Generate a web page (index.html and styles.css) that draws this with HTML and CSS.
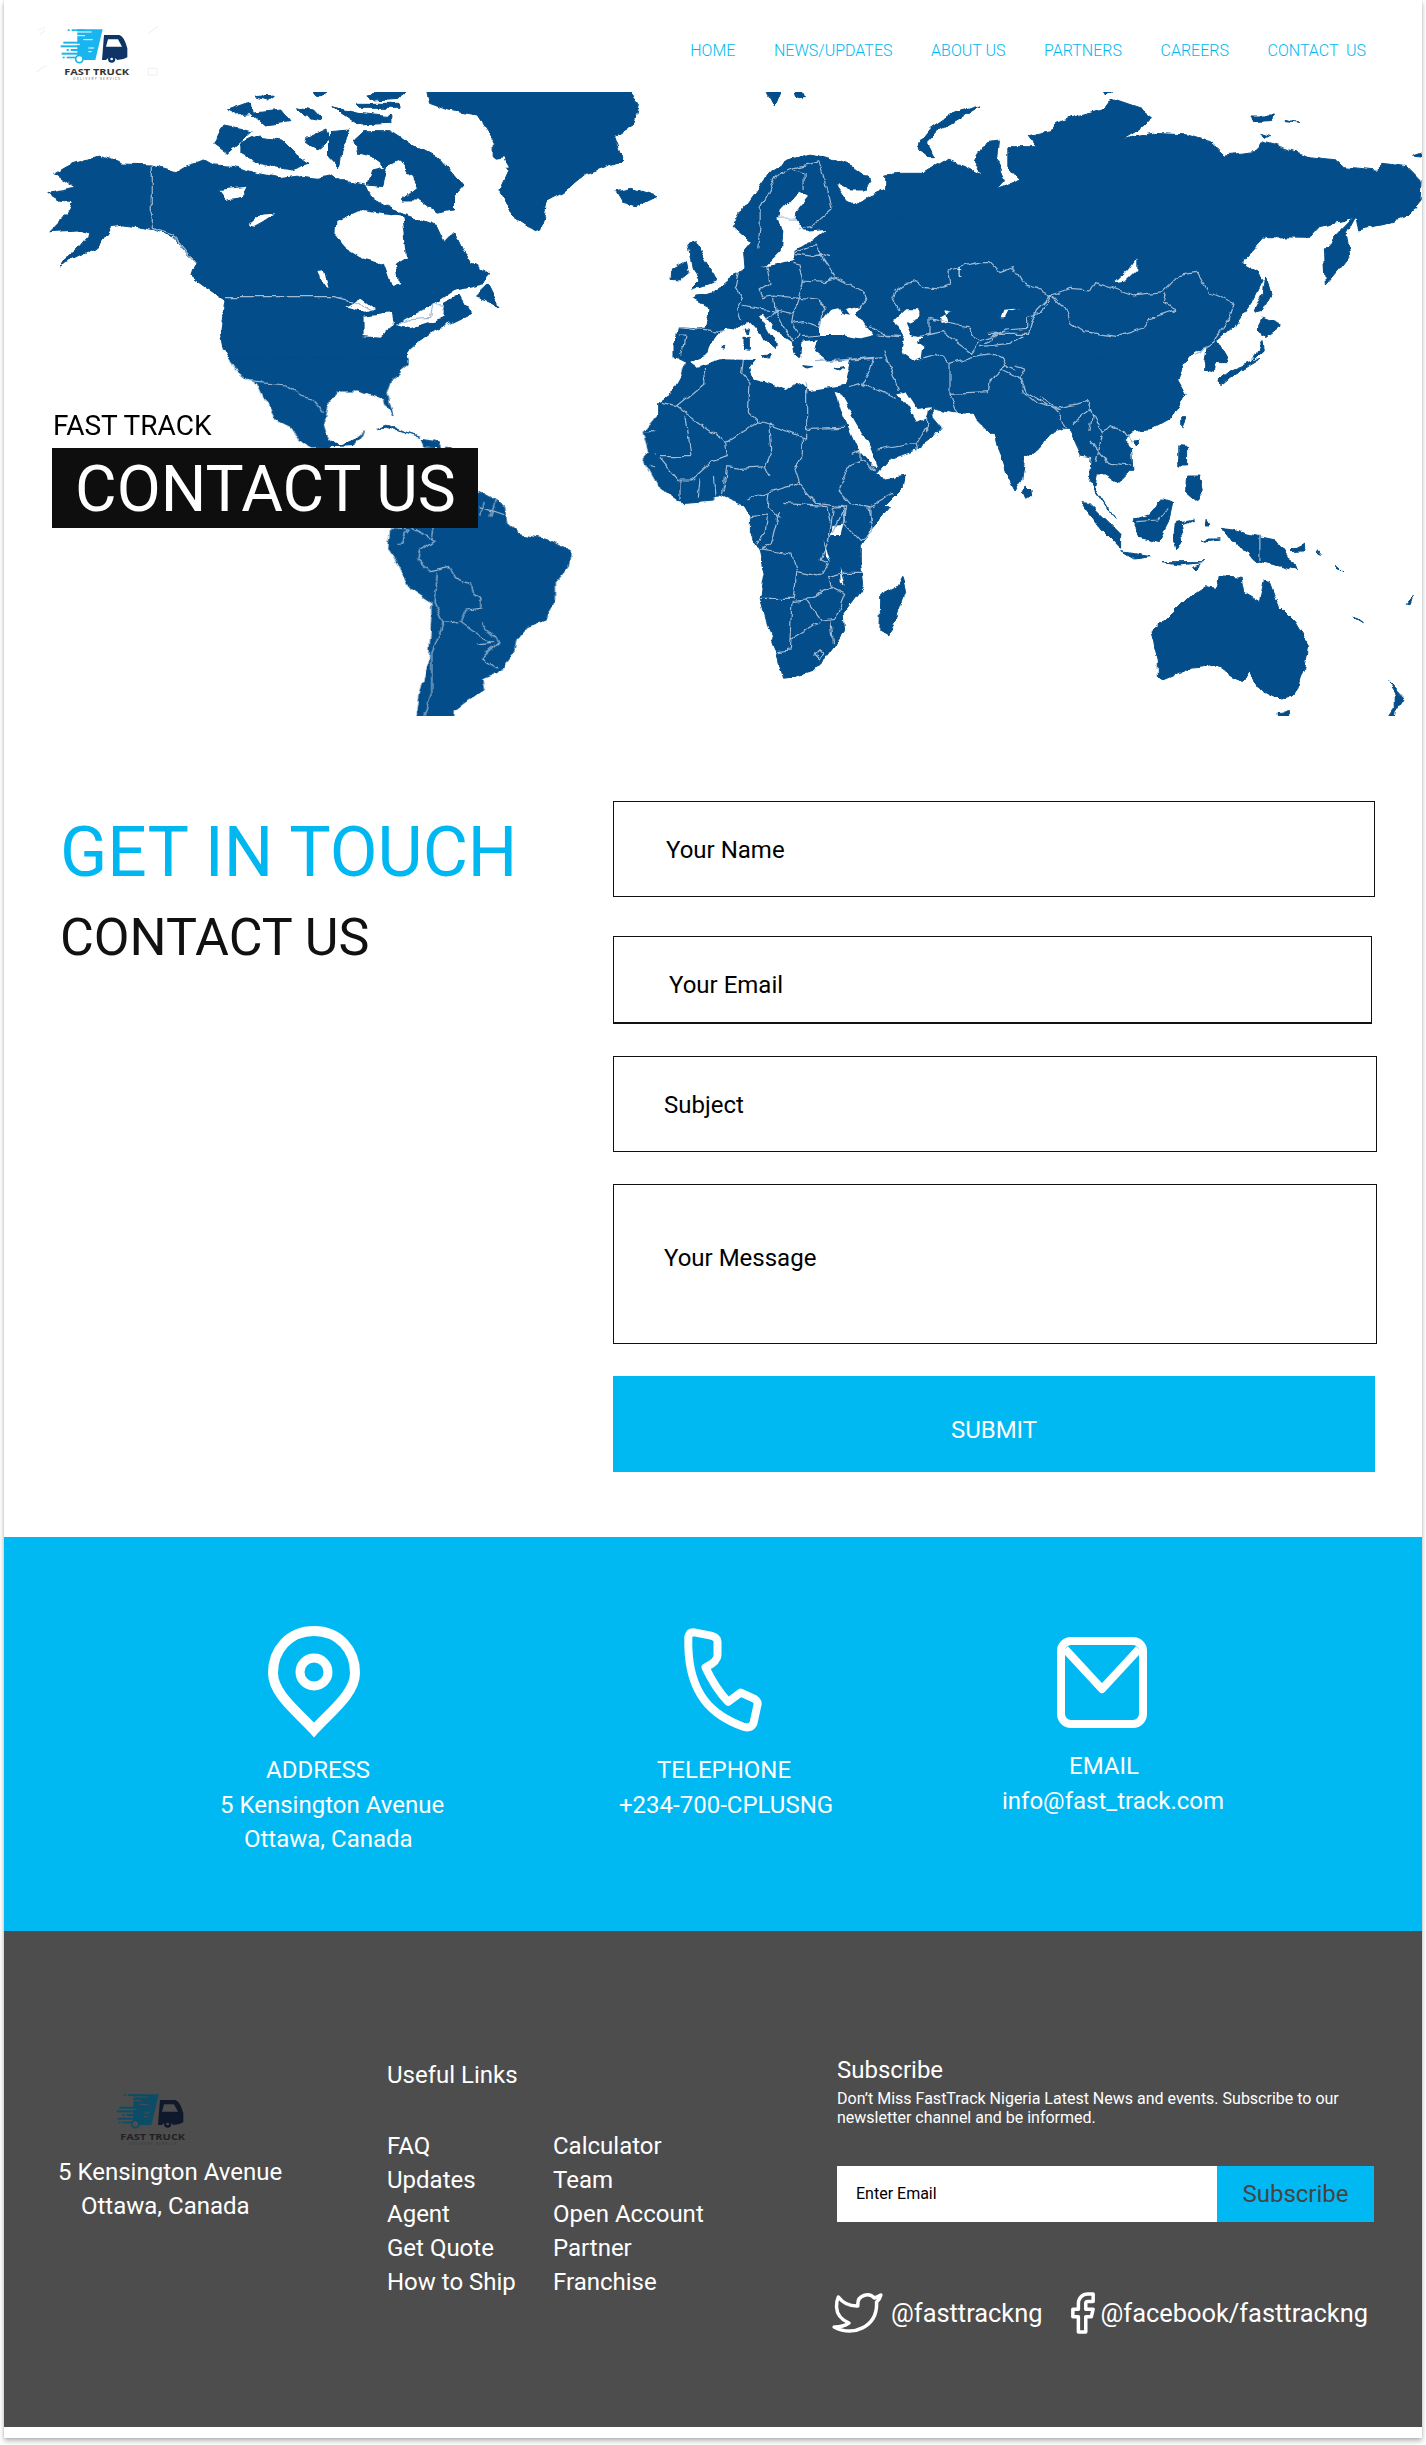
FILE: index.html
```html
<!DOCTYPE html>
<html lang="en">
<head>
<meta charset="utf-8">
<title>Fast Track - Contact Us</title>
<link rel="stylesheet" href="styles.css">
</head>
<body>
<div class="page">
  <header class="header">
    <svg class="logo logo-light" viewBox="0 0 480 240" aria-label="Fast Truck logo">
      <g class="wm"><path d="M55 60l20-8M60 75l15-15M385 70l30-22M50 185l30-20M385 175h25v20h-25z"/></g>
      <path class="cargo" d="M172 58H248L226 150H192L172 138Z"/>
      <g class="cargo">
        <rect x="143" y="58" width="6" height="5"/><rect x="155" y="58" width="40" height="5"/>
        <rect x="130" y="95" width="70" height="6"/><rect x="122" y="106" width="90" height="6"/>
        <rect x="140" y="117" width="6" height="6"/><rect x="152" y="117" width="50" height="6"/>
        <rect x="125" y="128" width="75" height="6"/><rect x="128" y="140" width="6" height="5"/><rect x="140" y="140" width="50" height="5"/>
      </g>
      <g class="gapline"><path d="M172 66H215M172 77H195M190 89H218M172 103H180M205 114H222M205 125H215"/></g>
      <circle class="gap ring" cx="178" cy="147" r="11"/>
      <path class="cab" d="M252 75H298Q312 78 322 115V142Q310 150 292 150Q275 130 258 150H246Z"/>
      <path class="gap" d="M264 88H294L306 110H258Z"/>
      <circle class="wheel" cx="275" cy="147" r="11"/><circle class="gap" cx="275" cy="147" r="4"/>
      <text class="logo-name" x="230" y="194" text-anchor="middle" textLength="195" lengthAdjust="spacingAndGlyphs">FAST TRUCK</text>
      <text class="logo-sub" x="230" y="210" text-anchor="middle" textLength="140">DELIVERY SERVICE</text>
    </svg>
    <nav class="nav">
      <a>HOME</a><a>NEWS/UPDATES</a><a>ABOUT US</a><a>PARTNERS</a><a>CAREERS</a><a class="nav-last">CONTACT  US</a>
    </nav>
  </header>

  <section class="hero">
    <svg class="map" viewBox="47 92 1375 624" width="1375" height="624" aria-label="World map">
      <defs>
        <filter id="coast" filterUnits="userSpaceOnUse" x="20" y="60" width="1430" height="690" color-interpolation-filters="sRGB">
          <feTurbulence type="fractalNoise" baseFrequency=".075" numOctaves="3" seed="4"/>
          <feDisplacementMap in="SourceGraphic" scale="7" xChannelSelector="R" yChannelSelector="G"/>
          <feGaussianBlur stdDeviation=".4"/>
        </filter>
      </defs>
      <g filter="url(#coast)">
      <!-- North America, Greenland (upper left) -->
      <g transform="scale(.4545 .3333)">
        <path class="land" d="M118 520L150 495 215 468 240 478 270 492 335 495 385 515 410 495 450 480 470 495 520 500 565 520 620 535 660 528 700 535 730 525 760 545 805 555 815 590 860 625 880 640 960 680 975 725 1000 690 1020 750 1040 790 1075 820 1065 850 1040 870 1010 880 1035 940 990 970 945 1000 925 1020 900 1050 895 1085 510 1085 490 1040 485 1000 495 900 450 860 420 830 430 790 380 710 340 690 300 680 270 675 245 680 215 740 170 770 130 795 170 750 200 700 170 690 110 695 150 640 160 605 130 600 105 580 165 565Z"/>
        <path class="sea" d="M740 660L790 630 830 640 885 650 890 700 895 770 870 790 878 850 862 855 845 790 790 770 760 745 738 710Z"/>
        <path class="sea" d="M480 570L540 560 530 590 495 600ZM545 675L570 645 608 640 580 665 560 680ZM700 810L715 808 725 865 710 850ZM760 920L795 893 825 925 805 935ZM800 950L860 940 865 975 835 1010 800 1005ZM870 975L950 915 1000 870 1070 848 1040 880 1010 885 975 910 980 950 900 985Z"/>
        <path class="land" d="M780 420L800 395 860 395 900 430 970 480 1020 560 1000 590 1000 630 960 640 920 600 885 600 920 560 880 480 850 500 820 470 790 460Z"/>
        <path class="sea" d="M888 535a10 12 0 1 0 20 0a10 12 0 1 0-20 0Z"/>
        <path class="land" d="M470 430L495 378 555 395 530 425 500 460ZM530 430L560 410 620 420 650 460 680 490 640 510 570 490 530 460ZM675 415L715 390 725 420 700 450 672 430ZM725 395L770 390 750 450 745 500 725 470ZM500 330L550 305 555 340 520 345ZM550 340L620 330 640 365 580 375ZM730 320L790 340 860 350 860 370 790 375ZM780 310L880 310 880 325 790 325ZM805 285L900 260 880 295 820 300ZM565 290L605 285 590 300ZM650 320L690 330 710 360 670 350ZM690 280L730 260 700 290ZM820 510L850 500 840 560 810 555ZM1060 870L1075 850 1100 920 1060 900 1045 890Z"/>
        <path class="land" d="M935 250L1370 250 1405 310 1395 370 1350 410 1370 480 1290 520 1240 575 1205 600 1190 690 1180 695 1130 650 1100 570 1120 510 1085 470 1085 420 1050 345 985 330 945 310Z"/>
        <path class="sea" d="M1088 480L1110 475 1120 500 1100 500Z"/>
        <path class="land" d="M1355 575L1390 565 1445 590 1400 620 1370 610Z"/>
        <path class="line" d="M335 495V685L380 705 430 790M495 890H735L780 905 820 930M870 975L900 960 945 955 950 915H975L980 950"/>
      </g>
      <!-- Central and South America, West Africa (lower left) -->
      <g transform="translate(0 360) scale(.4545 .3333)">
        <path class="land" d="M505-5H900V15L860 60 850 100 862 165 845 120 790 90 745 90 720 130 712 180 725 240 745 258 780 240 800 215 780 260 685 264 660 245 640 200 610 180 590 130 555 70 515 25Z"/>
        <path class="sea" d="M550 65L570 75 610 195 590 165Z"/>
        <path class="land" d="M830 205L850 195 885 215 920 232 880 215 850 205ZM925 238L965 245 970 260 930 258ZM980 255L992 258 982 262Z"/>
        <path class="land" d="M860 500L1051 395 1085 420 1110 440 1115 490 1140 520 1200 535 1255 575 1250 620 1220 670 1220 720 1200 780 1160 800 1135 840 1130 880 1095 940 1060 960 1065 990 1030 1020 1000 1050 995 1100H915L925 1000 945 900 950 770V730L905 690 880 620 855 565Z"/>
        <path class="land" d="M1570-10H1510L1495 90 1455 150 1417 215 1430 280 1417 300 1450 380 1500 428 1570 420Z"/>
        <path class="line" d="M858 505L900 510 875 555M905 505L955 540 925 570 918 600 945 635 990 622 1000 650 1035 670 1040 700 1060 720V745L1025 750 1015 785 1060 830 1085 850 1050 855M1060 790L1090 830 1095 850 1060 895 1095 925M960 640L955 730 975 790 1010 785M975 790L950 880V1000L935 1070M1055 440L1110 465M1065 420L1060 470M1090 420L1080 470M950 540L955 500M550 65L630 75 660 105 690 120 712 155M1417 215H1450L1458 150H1490L1568 215M1510 170L1515 295H1460L1440 280M1430 315L1470 340 1520 360M1490 120L1500 90 1568 80"/>
      </g>
      <!-- Russia, Scandinavia, East Asia (upper right) -->
      <g transform="translate(660 0) scale(.4885 .3333)">
        <path class="land" d="M150 680L165 640 225 515 260 480 310 462 350 475 400 505 432 540 418 570 390 570 360 548 385 600 405 615 428 590 460 570 460 525 490 520 535 520 580 480 620 495 660 525 645 480 670 425 695 420 690 490 705 540 690 565 735 540 710 500 710 440 770 440 755 410 800 395 810 370 860 345 910 325 925 295 985 325 1008 350 990 380 948 418 1010 400 1080 405 1125 425 1155 465 1220 455 1230 425 1270 440 1330 470 1385 480 1400 500 1465 510 1480 490 1530 500 1560 545 1558 600 1530 650 1490 670 1430 690 1425 650 1395 665 1350 680 1330 712 1240 710 1190 790 1225 820 1235 840 1215 900 1180 970 1140 1020 1165 1085H1115L1120 1045 1095 1050 1076 1085H350V800L250 780 200 745Z"/>
        <path class="sea" d="M240 690L250 630 285 575 303 590 275 640 270 680 340 685 300 700 290 720 320 730 270 740 245 760Z"/>
        <path class="sea" d="M975 778V810L950 845 930 850 960 810Z"/>
        <path class="land" d="M1425 645L1405 700 1412 770 1362 858 1358 750 1395 690ZM1240 830L1250 880 1230 935 1215 940 1235 880ZM1235 955L1270 975 1240 1010 1225 985ZM1215 1080L1232 1020 1235 1050 1210 1085ZM655 318L600 340 555 385 525 440 550 470 560 470 545 430 570 390 620 350ZM215 265H250L235 320ZM275 265L300 290 280 295ZM895 265H935L910 285ZM1210 345H1260L1250 365 1215 368ZM1280 358L1310 370 1280 365ZM1230 400L1250 410 1235 412ZM1540 465L1560 455V468Z"/>
      </g>
      <!-- Africa, South-East Asia, Oceania (lower right) -->
      <g transform="translate(660 360) scale(.4885 .3333)">
        <path class="land" d="M170 430L185 470 185 520 205 570 215 640 205 715 225 820 240 880 255 955 310 935 335 900 378 815 375 760 415 680 410 600 410 560 430 510 470 440Z"/>
        <path class="land" d="M760-5H1075L1060 60 1075 100 1050 170 1000 210 970 215 950 240 965 260 968 330 940 370 910 345 895 345 890 385 930 475 900 410 880 370 885 290 860 285 835 205 825 205 760 150Z"/>
        <path class="sea" d="M355 495L375 492 370 525 352 525ZM335 540L345 590 350 610 340 590ZM370 620L380 680 372 670Z"/>
        <path class="land" d="M495 652L503 695 480 790 465 828 450 815 452 705 485 680ZM862 428L880 430 945 525 945 570 905 510ZM945 575L1005 590 970 597ZM968 480L1000 465 1030 415 1050 425 1040 490 1020 545 985 530ZM1055 490L1095 480 1065 495 1070 540 1058 570 1052 530ZM1150 505L1175 510 1195 520 1260 540 1285 590 1303 632 1260 615 1215 600 1200 570 1170 545ZM1062 260L1078 262V315H1062ZM1078 345H1105L1112 390 1100 425 1076 395ZM1068 170H1078L1068 205ZM970 240L985 238 975 255ZM1030 605H1115L1060 612ZM1090 620L1110 610 1095 630ZM1110 540H1145L1120 545ZM1120 478L1128 498H1118ZM1290 572L1320 550 1315 570ZM1115 0H1135L1130 35 1115 30ZM1145 60L1170 30 1230-5 1190 30 1148 80Z"/>
        <path class="land" d="M1005 815L1050 760 1080 715 1115 680 1140 685 1145 650 1190 655 1195 700 1225 725 1235 660 1250 665 1270 745 1300 790 1328 860 1320 925 1300 1005 1270 1020 1230 990 1205 940 1190 965 1140 915 1090 925 1030 962 1020 950V900ZM1265 1055L1285 1052V1100H1270ZM1490 965L1522 1015 1505 1055 1500 1100H1478L1505 1040V1000ZM1530 730L1540 712 1535 735ZM1420 765L1440 788 1425 775ZM1345 572L1352 586 1346 582ZM1385 615L1400 635 1388 625Z"/>
      </g>
      <!-- Europe, North Africa, Middle East, India -->
      <g transform="translate(660 220) scale(.33333)">
        <path class="land" d="M305-5H1205V630L1170 640 1130 690 1095 715 1085 780 1065 810 1040 760 1015 680 1005 640 990 640 970 620 950 600 940 580 880 578 830 570 815 565 820 590 845 620 810 660 770 690 690 715 660 748 650 760 680 780 735 768 730 800 700 830 650 880 630 905H275L270 870 240 850 180 825 120 830 60 845 20 815 0 790-10 760V550L40 515 70 460 85 430 45 410 45 370 55 320 135 325 145 290 150 265 100 238 110 228 145 225 180 200 235 155 255 140 250 90 275 60 290 60Z"/>
        <path class="sea" d="M85 430L145 405 150 380 190 325 235 330 265 305 305 350 345 385 358 375 345 365 300 288 312 284 360 345 395 368 400 395 420 415 425 365 470 358 462 395 500 425 570 420 552 495 450 510 410 488 380 510 340 495 280 478 270 440 285 420 180 418 110 440Z"/>
        <path class="sea" d="M480 345L480 310 510 270 535 265 545 285 570 290 555 270 605 258 585 290 610 300 640 345 600 355 545 345Z"/>
        <path class="sea" d="M700 300L735 265H775V290L735 310 750 345 790 355 770 365 790 380 785 415 760 425 725 400 735 360Z"/>
        <path class="sea" d="M840 290L860 278 865 310 845 315ZM860 268L878 272 860 278ZM1022 295L1030 272 1085 268 1045 275 1035 295ZM527 515L540 520 580 590 620 660 655 745 640 740 590 680 550 590ZM715 520L735 515 770 570 810 565 800 590 770 605 750 570ZM300 140L340 135 400 120 400 90 440 65 470 55 500 30 440 35 405-5H355L370 40 365 90 320 135Z"/>
        <path class="land" d="M85 70L110 65 125 105 150 150 170 180 130 195 95 205 120 180 100 150 95 115ZM35 150L80 125 85 160 60 180 33 178ZM255 330H265L262 345ZM252 355H268V388L252 385ZM305 405L335 400 325 418ZM425 437L455 440 435 444ZM525 445L552 440 540 450ZM185 378L195 375 190 385ZM1095 795L1110 810 1112 830 1100 838 1090 815Z"/>
        <path class="line" d="M720 270L695 235 705 215 740 190 770 185 800 200 850 205 875 195 870 150 960 125H990L1020 155 1060 140 1090 190 1130 205 1170 225 1200 240M1175 225L1140 280 1100 290V325L1040 330 990 350 960 360 935 345 925 320 890 315 865 310 810 295V345M775 350L850 335 880 360 935 400 960 365M790 410L830 400 870 430V520L890 578M870 430L935 410 1000 400M870 520L985 515 990 480 1040 440 1070 450M1070 435L1095 445 1080 470 1090 515 1130 550 1200 570M1000 400L1030 410 1040 440M960 380L1050 370 1090 345M975 370L1010 345M675 390L690 440 715 510M650 345L720 350M465 425L540 420 670 410M570 420L640 415 630 450 605 490 710 535M565 500L600 490M650 690L770 670 805 610M765 670L770 695M800 590V640M440 490V655M440 625L555 622M270 490L265 575 295 605 330 615 440 655M330 615L335 690 315 740 330 770M250 420L245 460 270 490M295 605L200 668 50 560 135 490 130 445M200 668L205 710 155 725 95 780M50 560L0 550M75 590L90 710H0M430 655V705L405 745 420 790 470 850 545 860M420 790L330 815M320 740L240 745 200 740 190 820M650 750L600 720 570 735 535 810 570 850 630 860 700 820M575 700L600 690V720M0 715L55 780H95M60 780V840M120 775L115 830M160 770L165 825M190 770L185 825M330 815L325 860 360 895M370 850L500 860 510 905M545 860L555 905M630 860V905M265 840L330 815M235 155L225 200 245 235 230 270 240 305M320 135L330 190 300 210 310 230 340 225 415 235 430 180 420 135 400 130M480 100L520 160 530 175 500 185 430 180M400 100L460 110 490 100M400 95L470 70 480 100 510 110M530 175L610 215 620 240 600 258M415 235L400 280 395 310 430 305 480 320 495 260 470 240 415 235M340 225L345 270 395 280M245 255L300 265 345 270 320 300M345 270L370 320 400 365M395 310L420 345 400 365M480 345L425 350M60 345H75L65 410M55 320L190 335M630 320L680 345 720 350"/>
      </g>
      <!-- borders over the upper right and lower right -->
      <g transform="translate(660 0) scale(.4885 .3333)">
        <path class="line" d="M325 485L270 505 240 525 205 620V680L200 745M270 505L295 520V570M325 485L335 530 350 630 310 680 285 690M800 885L830 925 840 965 870 995 935 1010 990 985 1000 960 1060 930 1030 910 1035 880M800 885L840 865 880 870 890 845 930 865 970 885 1030 875 1060 830 1100 820 1125 880 1175 910 1165 955 1145 1000 1125 1040 1095 1060M800 885L770 930 755 1000 670 1000"/>
      </g>
      <g transform="translate(660 360) scale(.4885 .3333)">
        <path class="line" d="M780 110L810 145 875 125 885 165 880 210M845 190L880 150 905 220 920 200 950 215 965 245M880 240L920 310 965 315M905 220L890 300M700 30L740 60 750 95 810 150M810 150L830 205M185 470L220 465 215 520 200 550M245 450L235 510 225 550 205 570 270 585 280 635 330 650 345 610 330 600 345 540 355 445M355 445L380 440 345 540M380 440L375 490 410 545 435 510 425 440M280 635L275 715H205M270 725L265 870 240 875M270 725L300 720 330 780 265 840M300 720L350 680 380 700 360 775 330 780M350 780L355 850M315 885L325 870 335 885 325 900ZM375 640H415M350 680L345 650 370 640M1228 525V600M975 485L1020 480 1040 440"/>
      </g>
      </g>
      <text class="map-t" x="957" y="277">t</text>
    </svg>
    <div class="hero-title">
      <div class="hero-kicker">FAST TRACK</div>
      <h1 class="hero-box">CONTACT US</h1>
    </div>
  </section>

  <section class="contact">
    <div class="contact-heads">
      <h2 class="touch">GET IN TOUCH</h2>
      <div class="touch-sub">CONTACT US</div>
    </div>
    <form class="form">
      <div class="field f-name">Your Name</div>
      <div class="field f-email">Your Email</div>
      <div class="field f-subject">Subject</div>
      <div class="field f-message">Your Message</div>
      <div class="submit">SUBMIT</div>
    </form>
  </section>

  <section class="info">
    <div class="info-col">
      <svg class="ic-pin" viewBox="0 0 92 112"><path d="M46 5C21 5 5 24 5 47 5 68 30 86 46 104 62 86 87 68 87 47 87 24 71 5 46 5Z"/><circle cx="46" cy="46" r="14"/></svg>
      <div class="l-address">ADDRESS</div>
      <div>5 Kensington Avenue</div>
      <div class="l-ottawa">Ottawa, Canada</div>
    </div>
    <div class="info-col">
      <svg class="ic-phone" viewBox="725 88 128 320" preserveAspectRatio="none"><path d="M745 107L770 117Q780 122 780 135V175Q780 195 762 212C772 255 782 285 796 315L815 287 835 305Q842 315 840 325L834 380Q830 395 820 390C770 355 738 290 736 150V120Q738 105 745 107Z"/></svg>
      <div class="l-tel">TELEPHONE</div>
      <div>+234-700-CPLUSNG</div>
    </div>
    <div class="info-col">
      <svg class="ic-mail" viewBox="0 0 90 91"><rect x="4" y="4" width="82" height="83" rx="10"/><path d="M8 12L45 52 82 12"/></svg>
      <div class="l-email">EMAIL</div>
      <div>info@fast_track.com</div>
    </div>
  </section>

  <footer class="footer">
    <div class="f-about">
      <svg class="logo logo-dark" viewBox="0 0 480 240" aria-label="Fast Truck logo">
        <path class="cargo" d="M172 58H248L226 150H192L172 138Z"/>
        <g class="cargo">
          <rect x="143" y="58" width="6" height="5"/><rect x="155" y="58" width="40" height="5"/>
          <rect x="130" y="95" width="70" height="6"/><rect x="122" y="106" width="90" height="6"/>
          <rect x="140" y="117" width="6" height="6"/><rect x="152" y="117" width="50" height="6"/>
          <rect x="125" y="128" width="75" height="6"/><rect x="128" y="140" width="6" height="5"/><rect x="140" y="140" width="50" height="5"/>
        </g>
        <g class="gapline"><path d="M172 66H215M172 77H195M190 89H218M172 103H180M205 114H222M205 125H215"/></g>
        <circle class="gap ring" cx="178" cy="147" r="11"/>
        <path class="cab" d="M252 75H298Q312 78 322 115V142Q310 150 292 150Q275 130 258 150H246Z"/>
        <path class="gap" d="M264 88H294L306 110H258Z"/>
        <circle class="wheel" cx="275" cy="147" r="11"/><circle class="gap" cx="275" cy="147" r="4"/>
        <text class="logo-name" x="230" y="194" text-anchor="middle" textLength="195" lengthAdjust="spacingAndGlyphs">FAST TRUCK</text>
        <text class="logo-sub" x="230" y="210" text-anchor="middle" textLength="140">DELIVERY SERVICE</text>
      </svg>
      <div>5 Kensington Avenue</div>
      <div class="f-ottawa">Ottawa, Canada</div>
    </div>
    <div class="f-links">
      <div class="f-links-title">Useful Links</div>
      <div class="f-links-grid">
        <a>FAQ</a><a>Calculator</a>
        <a>Updates</a><a>Team</a>
        <a>Agent</a><a>Open Account</a>
        <a>Get Quote</a><a>Partner</a>
        <a>How to Ship</a><a>Franchise</a>
      </div>
    </div>
    <div class="f-sub">
      <div class="f-sub-title">Subscribe</div>
      <p class="f-sub-text">Don’t Miss FastTrack Nigeria Latest News and events. Subscribe to our newsletter channel and be informed.</p>
      <div class="f-sub-row">
        <div class="f-sub-input">Enter Email</div>
        <div class="f-sub-btn">Subscribe</div>
      </div>
      <div class="social">
        <svg class="ic-tw" viewBox="0 1.5 24 21" preserveAspectRatio="none"><path d="M23 3a10.9 10.9 0 0 1-3 1.5 4.48 4.48 0 0 0-7.86 3v1A10.66 10.66 0 0 1 3 4s-4 9 5 13a11.64 11.64 0 0 1-7 2c9 5 20 0 20-11.5a4.5 4.5 0 0 0-.08-.83A7.72 7.72 0 0 0 23 3z"/></svg>
        <span class="soc-tw">@fasttrackng</span>
        <svg class="ic-fb" viewBox="6 1 13 22" preserveAspectRatio="none"><path d="M18 2h-3a5 5 0 0 0-5 5v3H7v4h3v8h4v-8h3l1-4h-4V7a1 1 0 0 1 1-1h3z"/></svg>
        <span class="soc-fb">@facebook/fasttrackng</span>
      </div>
    </div>
  </footer>
</div>
</body>
</html>
```
FILE: styles.css
```css
* { box-sizing: border-box; }
html, body { margin: 0; padding: 0; background: #fff; }
body { font-family: Roboto, "Liberation Sans", sans-serif; color: #000; height: 2445px; overflow: hidden; }

.page {
  width: 1418px;
  height: 2438px;
  margin-left: 4px;
  background: #fff;
  box-shadow: 0 3px 5px rgba(0, 0, 0, .28), 0 0 2px rgba(0, 0, 0, .12);
}

/* header */
.header { display: flex; height: 92px; padding: 10px 56px 0 16px; justify-content: space-between; }
.logo { display: block; width: 160px; height: 80px; flex: none; }
.logo-light { --cargo: #19b5ee; --cab: #0e3566; --gap: #fff; --name: #333; --sub: #666; }
.logo-dark { --cargo: #0d4c66; --cab: #10192b; --gap: #4d4d4d; --name: #1f2226; --sub: #333; }
.cargo { fill: var(--cargo); }
.cab, .wheel { fill: var(--cab); }
.gap { fill: var(--gap); }
.ring { stroke: var(--cargo); stroke-width: 5; }
.gapline path { fill: none; stroke: var(--gap); stroke-width: 3; }
.logo-name { font: 700 25px "Open Sans", sans-serif; fill: var(--name); }
.logo-sub { font: 400 10px "Open Sans", sans-serif; fill: var(--sub); }
.wm path { fill: none; stroke: #f3f3f3; stroke-width: 4; }

.nav { display: flex; gap: 38.6px; align-items: center; height: 80px; font-size: 16px; font-weight: 300; color: #00b7f1; }
.nav-last { white-space: pre; }

/* hero */
.hero { position: relative; height: 624px; margin-left: 43px; }
.map { display: block; }
.land { fill: #034e8a; stroke: #034e8a; stroke-width: 1; vector-effect: non-scaling-stroke; stroke-linejoin: round; }
.sea { fill: #fff; }
.line { fill: none; stroke: #a3bbd4; stroke-width: 1.2; vector-effect: non-scaling-stroke; stroke-linejoin: round; }
.map-t { font: 300 15px Roboto, sans-serif; fill: #fff; }
.hero-title { position: absolute; left: 5px; top: 314px; }
.hero-kicker { font-size: 28px; font-weight: 400; line-height: 40px; margin: 0 0 2px 1px; color: #000; }
.hero-box { margin: 0; width: 426px; height: 80px; padding: 2px 0 0 23px; background: #0e0e0e; color: #fff; font-size: 64px; font-weight: 400; line-height: 80px; white-space: nowrap; }

/* contact form */
.contact { display: flex; height: 821px; padding: 85px 0 0 56px; }
.contact-heads { width: 553px; flex: none; }
.touch { margin: 11px 0 0; font-size: 69.5px; font-weight: 400; line-height: 82px; color: #00b7f1; white-space: nowrap; }
.touch-sub { font-size: 52px; line-height: 58px; margin-top: 15px; color: #111; white-space: nowrap; }
.form { display: flex; flex-direction: column; align-items: flex-start; }
.field { border: 1px solid #111; font-size: 24px; display: flex; }
.f-name { width: 762px; height: 96px; padding: 32px 0 0 52px; line-height: 32px; margin-bottom: 39px; }
.f-email { width: 759px; height: 88px; padding: 32px 0 0 55px; line-height: 32px; margin-bottom: 32px; border-bottom-width: 2px; }
.f-subject { width: 764px; height: 96px; padding: 32px 0 0 50px; line-height: 32px; margin-bottom: 32px; }
.f-message { width: 764px; height: 160px; padding: 57px 0 0 50px; line-height: 32px; margin-bottom: 32px; }
.submit { width: 762px; height: 96px; padding-top: 38px; background: #00b9f2; color: #fff; font-size: 24px; font-weight: 400; line-height: 32px; text-align: center; }

/* info strip */
.info { display: grid; grid-template-columns: 399px 383px 1fr; height: 394px; padding: 89px 0 0 216px; background: #00b9f2; color: #fff; font-size: 24px; font-weight: 400; line-height: 34.5px; }
.info svg { display: block; fill: none; stroke: #fff; }
.ic-pin { width: 92px; height: 112px; stroke-width: 10; margin: 0 0 15px 48px; }
.ic-pin circle { stroke-width: 9; }
.ic-phone { width: 85px; height: 107px; margin: 0 0 20px 62px; overflow: visible; }
.ic-phone path { stroke-width: 8; vector-effect: non-scaling-stroke; stroke-linejoin: round; }
.ic-mail { width: 90px; height: 91px; margin: 11px 0 21px 55px; stroke-width: 8; stroke-linejoin: round; }
.l-address { margin-left: 46px; }
.l-ottawa { margin-left: 24px; }
.l-tel { margin-left: 38px; }
.l-email { margin-left: 67px; }

/* footer */
.footer { display: grid; grid-template-columns: 329px 450px 1fr; height: 496px; padding-left: 54px; background: #4d4d4d; color: #fff; font-size: 24px; font-weight: 400; line-height: 34px; }
.f-about { padding-top: 144px; }
.logo-dark { margin-left: 18px; }
.f-ottawa { margin-left: 23px; }
.f-links { padding-top: 127px; }
.f-links-title { margin-bottom: 37px; }
.f-links-grid { display: grid; grid-template-columns: 166px 1fr; }
.f-sub { padding-top: 124px; }
.f-sub-title { line-height: 30px; }
.f-sub-text { margin: 4px 0 39px; width: 537px; font-size: 16px; line-height: 19px; }
.f-sub-row { display: flex; height: 56px; width: 537px; }
.f-sub-input { width: 380px; padding-left: 19px; background: #fff; color: #000; font-size: 16px; font-weight: 400; line-height: 56px; }
.f-sub-btn { width: 157px; background: #00b9f2; color: #444; line-height: 56px; text-align: center; }
.social { display: flex; align-items: center; height: 44px; margin: 69px 0 0 -5px; font-size: 25.4px; }
.social svg { display: block; fill: none; stroke: #fff; overflow: visible; flex: none; }
.social path { vector-effect: non-scaling-stroke; stroke-linejoin: round; stroke-width: 3.5; }
.ic-tw { width: 51px; height: 42px; }
.soc-tw { margin: 0 28px 0 8px; }
.ic-fb { width: 24px; height: 42px; }
.soc-fb { margin-left: 6px; }
```
